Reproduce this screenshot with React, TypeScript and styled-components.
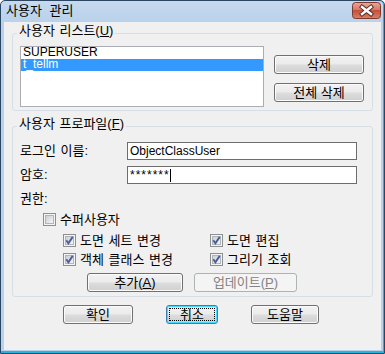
import styled, { createGlobalStyle } from "styled-components";

const GlobalStyle = createGlobalStyle`
  html, body {
    margin: 0;
    padding: 0;
    background: #ffffff;
  }
  body {
    font-family: "Liberation Sans", "Noto Sans CJK KR", sans-serif;
    font-size: 13px;
    word-spacing: 1px;
    color: #000;
  }
  * {
    box-sizing: border-box;
  }
`

const Window = styled.div`
    width: 385px;
    height: 354px;
    display: flex;
    flex-direction: column;
    padding: 0 3px 3px;
    border: 1px solid #2b4662;
    border-radius: 5px 5px 0 0;
    background: linear-gradient(to bottom, #c6d9ef 0px, #b9d1ea 22px, #b9d1ea 100%);
    box-shadow: inset 0 -2px 0 #27b4dc, inset -1px 0 0 #27b4dc;
`

const TitleBar = styled.div`
    height: 21px;
    display: flex;
    align-items: center;
    justify-content: space-between;
    padding-left: 2px;
`

const Title = styled.span`
    font-size: 13px;
    line-height: 14px;
    word-spacing: 4px;
    margin-top: -1px;
`

const CloseButton = styled.div`
    align-self: flex-start;
    margin-top: 1px;
    display: flex;
`

const Client = styled.div`
    flex: 1;
    display: flex;
    flex-direction: column;
    background: #f0f0f0;
    padding: 3px 8px 0 8px;
`

const Group = styled.fieldset<{ $gap?: number }>`
    margin: ${p => p.$gap ?? 0}px 0 0 0;
    padding: 5px 8px 3px 7px;
    border: 1px solid #d5dfe5;
    border-radius: 3px;
    min-width: 0;
`

const GroupTitle = styled.legend`
    margin-left: -3px;
    padding: 0 2px 4px 2px;
    line-height: 12px;
`

const ListRow = styled.div`
    display: flex;
    align-items: flex-start;
`

const ListBox = styled.div`
    width: 244px;
    height: 61px;
    background: #fff;
    border: 1px solid #abadb3;
    display: flex;
    flex-direction: column;
`

const ListItem = styled.div<{ $selected?: boolean }>`
    height: 12px;
    line-height: 11px;
    font-size: 12px;
    word-spacing: 0;
    padding-left: 2px;
    background: ${p => p.$selected ? "#3399ff" : "transparent"};
    color: ${p => p.$selected ? "#fff" : "#000"};
`

const SideButtons = styled.div`
    display: flex;
    flex-direction: column;
    gap: 9px;
    margin-left: 10px;
    padding-top: 9px;
`

const Button = styled.button<{ $w: number; $focused?: boolean }>`
    width: ${p => p.$w}px;
    height: 19px;
    padding: 0;
    font: inherit;
    line-height: 12px;
    color: #000;
    border: 1px solid ${p => p.$focused ? "#3c7fb1" : "#707070"};
    border-radius: 3px;
    background: linear-gradient(to bottom, #f2f2f2 0%, #ebebeb 48%, #dddddd 52%, #cfcfcf 100%);
    box-shadow: inset 0 0 0 1px ${p => p.$focused ? "#48d8fd" : "#fbfbfb"};
    outline: ${p => p.$focused ? "1px dotted #000" : "none"};
    outline-offset: -4px;

    &:disabled {
        color: #838383;
        border-color: #adb2b5;
        background: #f4f4f4;
        box-shadow: none;
    }
`

const FormRow = styled.div<{ $gap?: number }>`
    display: flex;
    align-items: center;
    margin-top: ${p => p.$gap ?? 0}px;
`

const Label = styled.span`
    width: 107px;
    line-height: 14px;
`

const TextField = styled.div<{ $secret?: boolean }>`
    width: 230px;
    height: 18px;
    border: 1px solid #6d6d6d;
    background: #fff;
    padding-left: 2px;
    display: flex;
    align-items: center;
    font-size: 12px;
    word-spacing: 0;
    letter-spacing: ${p => p.$secret ? "1px" : "0"};
    line-height: 14px;
`

const Caret = styled.span`
    display: inline-block;
    width: 1px;
    height: 13px;
    background: #000;
`

const SectionLabel = styled.div`
    margin-top: 8px;
    line-height: 14px;
`

const CheckRow = styled.label<{ $indent?: number; $gap?: number }>`
    display: flex;
    align-items: center;
    gap: 4px;
    height: 13px;
    margin-left: ${p => p.$indent ?? 0}px;
    margin-top: ${p => p.$gap ?? 0}px;
    line-height: 13px;
    white-space: nowrap;
`

const CheckGrid = styled.div`
    display: grid;
    grid-template-columns: 147px auto;
    row-gap: 6px;
    margin-top: 8px;
    padding-left: 43px;
`

const Box = styled.span`
    width: 13px;
    height: 13px;
    flex: none;
    border: 1px solid #8e8f8f;
    background: #f4f4f4;
    padding: 1px;
    display: flex;
`

const BoxFill = styled.span`
    flex: 1;
    position: relative;
    border: 1px solid #b0b4bb;
    background: linear-gradient(135deg, #cbcfd5 0%, #e2e4e7 55%, #f6f6f6 100%);

    svg {
        position: absolute;
        left: -3px;
        top: -3px;
    }
`

const ActionRow = styled.div`
    display: flex;
    justify-content: center;
    gap: 11px;
    margin-top: 7px;
`

const DialogButtons = styled.div`
    display: flex;
    gap: 33px;
    margin-top: 8px;
    padding-left: 51px;
`

const Group2 = styled(Group)`
    padding-top: 8px;
    padding-bottom: 4px;
`

function Check({ checked }: { checked?: boolean }) {
    return (
        <Box>
            <BoxFill>
                {checked && (
                    <svg width="13" height="13" viewBox="0 0 13 13">
                        <path d="M3.3 6.3 L5.4 9.3 L9.7 2.9" fill="none" stroke="#4a5f97" strokeWidth="1.9" strokeLinejoin="miter" />
                    </svg>
                )}
            </BoxFill>
        </Box>
    )
}

export default function App() {
    return (
        <>
            <GlobalStyle />
            <Window>
                <TitleBar>
                    <Title>사용자 관리</Title>
                    <CloseButton>
                        <svg width="29" height="17" viewBox="0 0 29 17">
                            <defs>
                                <linearGradient id="closeGrad" x1="0" y1="0" x2="0" y2="1">
                                    <stop offset="0" stopColor="#e9a898" />
                                    <stop offset="0.45" stopColor="#d67866" />
                                    <stop offset="0.5" stopColor="#c5503c" />
                                    <stop offset="1" stopColor="#d88166" />
                                </linearGradient>
                            </defs>
                            <rect x="0.5" y="0.5" width="28" height="16" rx="3" fill="url(#closeGrad)" stroke="#7c3b30" />
                            <path d="M10 5 L19 12 M19 5 L10 12" stroke="#4e2620" strokeWidth="4.2" strokeLinecap="square" />
                            <path d="M10 5 L19 12 M19 5 L10 12" stroke="#ffffff" strokeWidth="2.4" strokeLinecap="square" />
                        </svg>
                    </CloseButton>
                </TitleBar>
                <Client>
                    <Group>
                        <GroupTitle>사용자 리스트(<u>U</u>)</GroupTitle>
                        <ListRow>
                            <ListBox>
                                <ListItem>SUPERUSER</ListItem>
                                <ListItem $selected>t_tellm</ListItem>
                            </ListBox>
                            <SideButtons>
                                <Button $w={90}>삭제</Button>
                                <Button $w={90}>전체 삭제</Button>
                            </SideButtons>
                        </ListRow>
                    </Group>

                    <Group2 $gap={7}>
                        <GroupTitle>사용자 프로파일(<u>F</u>)</GroupTitle>
                        <FormRow>
                            <Label>로그인 이름:</Label>
                            <TextField>ObjectClassUser</TextField>
                        </FormRow>
                        <FormRow $gap={6}>
                            <Label>암호:</Label>
                            <TextField $secret>*******<Caret /></TextField>
                        </FormRow>
                        <SectionLabel>권한:</SectionLabel>
                        <CheckRow $indent={23} $gap={7}>
                            <Check />
                            수퍼사용자
                        </CheckRow>
                        <CheckGrid>
                            <CheckRow><Check checked />도면 세트 변경</CheckRow>
                            <CheckRow><Check checked />도면 편집</CheckRow>
                            <CheckRow><Check checked />객체 클래스 변경</CheckRow>
                            <CheckRow><Check checked />그리기 조회</CheckRow>
                        </CheckGrid>
                        <ActionRow>
                            <Button $w={96}>추가(<u>A</u>)</Button>
                            <Button $w={103} disabled>업데이트(<u>P</u>)</Button>
                        </ActionRow>
                    </Group2>

                    <DialogButtons>
                        <Button $w={70}>확인</Button>
                        <Button $w={52} $focused>취소</Button>
                        <Button $w={68}>도움말</Button>
                    </DialogButtons>
                </Client>
            </Window>
        </>
    )
}
